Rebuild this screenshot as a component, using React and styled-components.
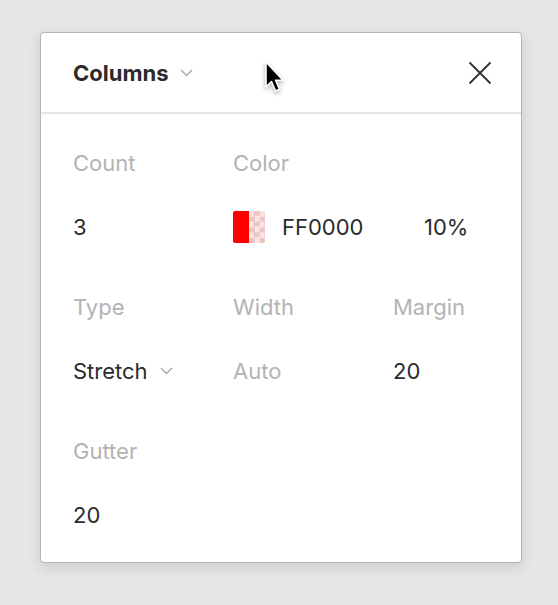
import React from "react";
import styled, { createGlobalStyle } from "styled-components";

const GlobalStyle = createGlobalStyle`
  html, body {
    margin: 0;
    padding: 0;
    background: #e6e6e6;
    font-family: Inter, "Noto Sans", "Liberation Sans", sans-serif;
    -webkit-font-smoothing: antialiased;
  }
`;

const Page = styled.div`
  position: relative;
  width: 558px;
  height: 605px;
  padding: 32px 0 0 40px;
  box-sizing: border-box;
`;

const Panel = styled.div`
  width: 482px;
  height: 531px;
  box-sizing: border-box;
  background: #fff;
  border: 1px solid #b4b4b4;
  border-radius: 4px;
  box-shadow: 0 4px 14px rgba(0, 0, 0, 0.12);
  display: flex;
  flex-direction: column;
`;

const Header = styled.div`
  height: 79px;
  flex-shrink: 0;
  display: flex;
  align-items: center;
  justify-content: space-between;
  padding: 0 28px 0 32px;
  border-bottom: 2px solid #e6e6e6;
`;

const Title = styled.button`
  display: flex;
  align-items: center;
  gap: 11px;
  border: none;
  background: none;
  padding: 0;
  font-family: inherit;
  font-size: 22px;
  font-weight: 700;
  color: #2b2b2b;
`;

const CloseButton = styled.button`
  width: 26px;
  height: 26px;
  padding: 0;
  border: none;
  background: none;
  display: flex;
  align-items: center;
  justify-content: center;
`;

const Body = styled.div`
  display: grid;
  grid-template-columns: repeat(3, 160px);
  row-gap: 52px;
  padding: 37px 0 0 32px;
`;

const Field = styled.div`
  grid-column: span ${(p) => p.span || 1};
  display: flex;
  flex-direction: column;
`;

const Label = styled.div`
  font-size: 22px;
  line-height: 24px;
  color: #b3b3b3;
  margin-bottom: 36px;
`;

const Value = styled.div`
  height: 32px;
  display: flex;
  align-items: center;
  font-size: 22px;
  color: ${(p) => (p.muted ? "#b3b3b3" : "#2b2b2b")};
  gap: ${(p) => p.gap || 10}px;
`;

const Swatch = styled.div`
  width: 32px;
  height: 32px;
  border-radius: 2px;
  overflow: hidden;
  display: flex;
`;

const SwatchSolid = styled.div`
  width: 16px;
  background: #ff0000;
`;

const SwatchAlpha = styled.div`
  width: 16px;
  background-color: #fde2e2;
  background-image: conic-gradient(
    #ebc6c6 25%,
    transparent 0 50%,
    #ebc6c6 0 75%,
    transparent 0
  );
  background-size: 10.67px 10.67px;
`;

const Hex = styled.span`
  width: 132px;
  margin-left: 7px;
`;

const Cursor = styled.svg`
  position: absolute;
  left: 263px;
  top: 60px;
  filter: drop-shadow(0 2px 2px rgba(0, 0, 0, 0.3));
`;

const Chevron = () => (
  <svg width="13" height="8" viewBox="0 0 13 8" fill="none">
    <path d="M1 1l5.5 5.5L12 1" stroke="#a6a6a6" strokeWidth="1.4" />
  </svg>
);

export default function App() {
  return (
    <>
      <GlobalStyle />
      <Page>
        <Panel>
          <Header>
            <Title>
              Columns
              <Chevron />
            </Title>
            <CloseButton aria-label="Close">
              <svg width="24" height="24" viewBox="0 0 24 24" fill="none">
                <path d="M1.5 1.5l21 21M22.5 1.5l-21 21" stroke="#333" strokeWidth="1.8" />
              </svg>
            </CloseButton>
          </Header>
          <Body>
            <Field>
              <Label>Count</Label>
              <Value>3</Value>
            </Field>
            <Field span={2}>
              <Label>Color</Label>
              <Value>
                <Swatch>
                  <SwatchSolid />
                  <SwatchAlpha />
                </Swatch>
                <Hex>FF0000</Hex>
                <span>10%</span>
              </Value>
            </Field>
            <Field>
              <Label>Type</Label>
              <Value gap={12}>
                Stretch
                <Chevron />
              </Value>
            </Field>
            <Field>
              <Label>Width</Label>
              <Value muted>Auto</Value>
            </Field>
            <Field>
              <Label>Margin</Label>
              <Value>20</Value>
            </Field>
            <Field>
              <Label>Gutter</Label>
              <Value>20</Value>
            </Field>
          </Body>
        </Panel>
        <Cursor width="22" height="36" viewBox="0 0 22 36">
          <path
            d="M3 2 L3 27 L8.5 21.5 L12.5 31 L16.5 29.3 L12.6 20.2 L20 20.2 Z"
            fill="#000"
            stroke="#fff"
            strokeWidth="1.6"
            strokeLinejoin="round"
          />
        </Cursor>
      </Page>
    </>
  );
}
